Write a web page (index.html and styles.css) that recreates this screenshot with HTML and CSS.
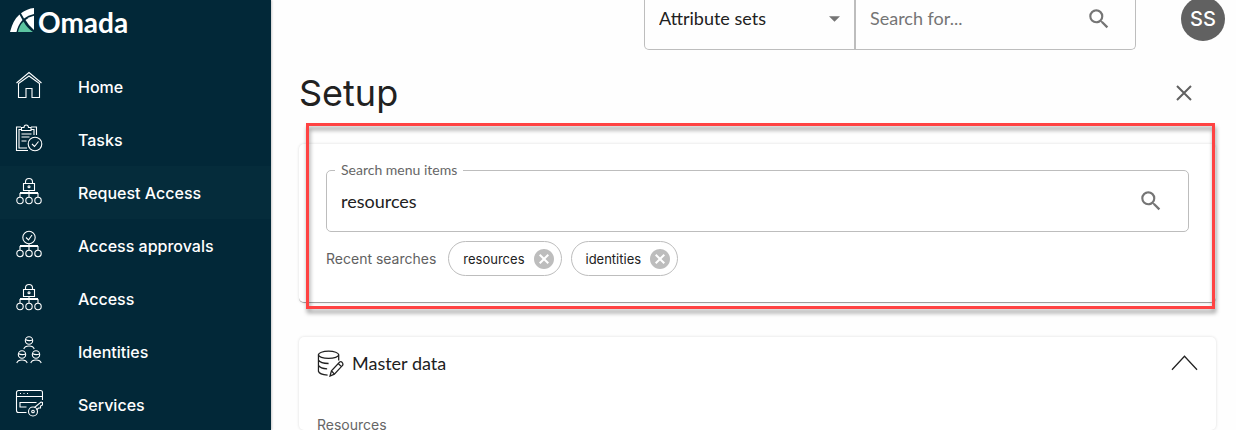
FILE: index.html
```html
<!DOCTYPE html>
<html lang="en">
<head>
<meta charset="utf-8">
<title>Omada - Setup</title>
<link rel="stylesheet" href="styles.css">
</head>
<body>
<svg class="defs" aria-hidden="true">
  <symbol id="search" viewBox="0 0 24 24"><path d="M15.5 14h-.79l-.28-.27A6.471 6.471 0 0 0 16 9.5 6.5 6.5 0 1 0 9.5 16c1.61 0 3.09-.59 4.23-1.57l.27.28v.79l5 4.99L20.49 19l-4.99-5zm-6 0C7.01 14 5 11.99 5 9.5S7.01 5 9.5 5 14 7.01 14 9.5 11.99 14 9.5 14z"/></symbol>
  <symbol id="remove" viewBox="0 0 24 24"><path d="M12 2C6.47 2 2 6.47 2 12s4.47 10 10 10 10-4.47 10-10S17.53 2 12 2zm5 13.59L15.59 17 12 13.41 8.41 17 7 15.59 10.59 12 7 8.41 8.41 7 12 10.59 15.59 7 17 8.41 13.41 12 17 15.59z"/></symbol>
  <symbol id="nodes" viewBox="0 0 28 28"><path d="M14 14v6M5 20v-3.500h18V20M5 15.500h18"/><circle cx="5" cy="23.500" r="3.200"/><circle cx="14" cy="23.500" r="3.200"/><circle cx="23" cy="23.500" r="3.200"/></symbol>
  <symbol id="locked" viewBox="0 0 28 28"><path d="M8.500 6.500h11v7h-11zM10.500 6.500V5a3.500 3.500 0 0 1 7 0v1.500"/><circle cx="14" cy="9.800" r="1"/><use href="#nodes"/></symbol>
  <symbol id="person" viewBox="0 0 12 14"><circle cx="6" cy="4.500" r="3.700"/><path d="M2.500 3.500q3 2 7 .5M.8 13q.8-3 5.200-3t5.200 3"/></symbol>
</svg>
<nav class="sidebar">
  <a class="brand" href="#">
    <svg class="mark" viewBox="0 0 24 24" aria-hidden="true">
      <path fill="#fff" d="M0 24Q3 12 9.500 6.500L12.500 12Q8 17 6.500 24z"/>
      <path fill="#fff" d="M11 5.200Q17 .8 24 0v6q-6 1-10 4.600z"/>
      <path fill="#fff" d="M15.500 12q4-3.300 8.500-4.200V22q-5.500-4.500-8.500-10z"/>
      <path fill="#5cc4a0" d="M8 24q1.200-6.500 5.500-10.500Q17 20 23 24z"/>
    </svg>
    <span>Omada</span>
  </a>
  <ul class="menu">
    <li><a href="#"><svg class="line" viewBox="0 0 28 28" aria-hidden="true"><path d="M1.500 12 14 1.500 26.500 12M3.500 12.500v14H11v-9h6v9h7.500v-14L14 5z"/></svg>Home</a></li>
    <li><a href="#"><svg class="line" viewBox="0 0 28 28" aria-hidden="true"><path d="M6 3H1.500v23.500H13M6 5.500H4V24h8M16 3h5.500v8M16 5.500h3V11M6.500 6.500v-3H9q0-2.500 2.200-2.500T13.500 3.500H16v3zM6.500 10h10M6.500 13h8M6.500 17h5M17 20l2.500 2.500 4-5"/><circle cx="20" cy="20" r="6.800"/></svg>Tasks</a></li>
    <li><a class="hovered" href="#"><svg class="line" viewBox="0 0 28 28" aria-hidden="true"><use href="#locked"/></svg>Request Access</a></li>
    <li><a href="#"><svg class="line" viewBox="0 0 28 28" aria-hidden="true"><circle cx="14" cy="7.500" r="6.200"/><path d="m11 7.500 2.500 2.500 3.500-5"/><use href="#nodes"/></svg>Access approvals</a></li>
    <li><a href="#"><svg class="line" viewBox="0 0 28 28" aria-hidden="true"><use href="#locked"/></svg>Access</a></li>
    <li><a href="#"><svg class="line" viewBox="0 0 28 28" aria-hidden="true"><use href="#person" x="8" y="0" width="12" height="14"/><use href="#person" x="1" y="14" width="12" height="14"/><use href="#person" x="15" y="14" width="12" height="14"/></svg>Identities</a></li>
    <li><a href="#"><svg class="line" viewBox="0 0 28 28" aria-hidden="true"><path d="M11.500 23.500h-8a2 2 0 0 1-2-2v-18a2 2 0 0 1 2-2h22a2 2 0 0 1 2 2V11M1.500 7.500h26M5 4.500h1M8.500 4.500h1M12 4.500h1M11.500 18H5v-4.500h16.500M19.500 18.500l6.500-5.500 1.500.500v2.500l-2 1v2h-2l-2 2"/><circle cx="18" cy="22.500" r="4.500"/><circle cx="18" cy="22.500" r="1.300"/></svg>Services</a></li>
  </ul>
</nav>
<main class="main">
  <header class="topbar">
    <form class="global-search">
      <span class="scope">
        <select aria-label="Search scope"><option>Attribute sets</option></select>
        <svg class="arrow" viewBox="0 0 10 5" aria-hidden="true"><path d="M0 0h10L5 5z"/></svg>
      </span>
      <input type="text" aria-label="Search" placeholder="Search for...">
      <button class="icon-button" type="button" aria-label="Search"><svg class="icon" aria-hidden="true"><use href="#search"/></svg></button>
    </form>
    <button class="avatar" type="button">SS</button>
  </header>
  <div class="title-row">
    <h1>Setup</h1>
    <button class="icon-button" type="button" aria-label="Close"><svg class="close" viewBox="0 0 16 16" aria-hidden="true"><path d="m1 1 14 14M15 1 1 15"/></svg></button>
  </div>
  <section class="card search-card">
    <fieldset class="field">
      <legend><label for="menu-search">Search menu items</label></legend>
      <div class="field-row">
        <input id="menu-search" type="text" value="resources">
        <button class="icon-button" type="button" aria-label="Search"><svg class="icon" aria-hidden="true"><use href="#search"/></svg></button>
      </div>
    </fieldset>
    <div class="recent">
      <span class="recent-label">Recent searches</span>
      <span class="chip">resources<button class="icon-button" type="button" aria-label="Remove resources"><svg class="icon" aria-hidden="true"><use href="#remove"/></svg></button></span>
      <span class="chip">identities<button class="icon-button" type="button" aria-label="Remove identities"><svg class="icon" aria-hidden="true"><use href="#remove"/></svg></button></span>
    </div>
    <div class="highlight"></div>
  </section>
  <section class="card data-card">
    <button class="section-head" type="button" aria-expanded="true">
      <svg class="database" viewBox="0 0 28 28" aria-hidden="true"><ellipse cx="12" cy="5" rx="10.500" ry="3.800"/><path d="M1.500 5v17q1 3.500 9.500 4M22.500 5v6M1.500 10.500q2 3.500 10.500 3.500M1.500 16q2 3.500 9 3.500M13.500 27l1.500-5.500L23.500 12.500q2-1 3 1t-.5 3L18 25zM15 21.500l3 3.500M22 14l3.500 3.500"/></svg>
      <span>Master data</span>
      <svg class="chevron" viewBox="0 0 28 16" aria-hidden="true"><path d="M1 15 14 1l13 14"/></svg>
    </button>
    <h2>Resources</h2>
  </section>
</main>
</body>
</html>
```

FILE: styles.css
```css
* { box-sizing: border-box; }
body {
  display: flex;
  margin: 0;
  height: 100vh;
  overflow: hidden;
  background: #fefefe;
  color: #212121;
  font: 18px/24px Lato, "Open Sans", sans-serif;
}
button, input, select { font: inherit; color: inherit; }
.defs { position: absolute; width: 0; height: 0; }

.sidebar {
  flex: none;
  width: 271px;
  background: #022838;
  color: #fff;
  box-shadow: 1px 0 2px rgba(0, 0, 0, .2);
}
.brand {
  display: flex;
  align-items: center;
  gap: 4px;
  height: 60px;
  padding: 0 10px 16px;
  color: #fff;
  font-size: 28px;
  font-weight: 700;
  text-decoration: none;
}
.mark { width: 24px; height: 24px; margin-bottom: 4px; }
.menu { margin: 0; padding: 0; list-style: none; }
.menu a {
  display: flex;
  align-items: center;
  gap: 35px;
  height: 53px;
  padding: 0 15px;
  color: #fff;
  font-family: Inter, sans-serif;
  font-size: 16px;
  font-weight: 500;
  text-decoration: none;
}
.menu .hovered { background: #052c3b; }
.line {
  width: 28px;
  height: 28px;
  margin-bottom: 4px;
  fill: none;
  stroke: #fff;
  stroke-width: 1.1;
}

.main {
  display: flex;
  flex: 1;
  flex-direction: column;
  min-width: 0;
  padding: 0 20px 0 28px;
}
.topbar {
  display: flex;
  flex: none;
  justify-content: flex-end;
  gap: 45px;
  height: 50px;
  margin-right: -9px;
}
.global-search {
  display: flex;
  width: 492px;
  border: 1px solid #bdbdbd;
  border-top: 0;
  border-radius: 0 0 5px 5px;
  padding-right: 23px;
}
.scope {
  display: flex;
  align-items: center;
  width: 211px;
  padding: 0 14px;
  border-right: 2px solid #bdbdbd;
}
.global-search select {
  flex: 1;
  min-width: 0;
  height: 36px;
  margin-bottom: 14px;
  padding: 0;
  border: 0;
  background: none;
  appearance: none;
}
.arrow { width: 11px; height: 6px; margin-bottom: 12px; fill: #757575; }
.global-search input {
  flex: 1;
  min-width: 0;
  height: 36px;
  padding: 0 14px;
  border: 0;
  background: none;
}
.global-search input::placeholder { color: #757575; opacity: 1; }
.global-search .icon-button { height: 38px; }
.icon-button {
  display: flex;
  align-items: center;
  padding: 0;
  border: 0;
  background: none;
  color: #757575;
}
.icon { width: 26px; height: 26px; fill: currentColor; }
.avatar {
  width: 44px;
  height: 44px;
  margin-top: -3px;
  padding: 0;
  border: 0;
  border-radius: 50%;
  background: #616161;
  color: #fff;
  font: 500 20px/44px Inter, sans-serif;
}

.title-row {
  display: flex;
  flex: none;
  align-items: center;
  justify-content: space-between;
  padding: 20px 24px 28px 0;
}
h1 {
  margin: 0;
  font: 400 36px/46px Inter, sans-serif;
}
.close {
  width: 16px;
  height: 16px;
  fill: none;
  stroke: #616161;
  stroke-width: 2;
}

.card {
  border-radius: 5px;
  background: #fff;
  box-shadow: 0 0 3px rgba(0, 0, 0, .14);
}
.search-card {
  position: relative;
  flex: none;
  margin-bottom: 34px;
  padding: 18px 27px 26px;
  border-bottom: 1px solid #9e9e9e;
}
.field {
  min-width: 0;
  height: 70px;
  margin: 0;
  padding: 0 24px 0 8px;
  border: 1px solid #bdbdbd;
  border-radius: 5px;
}
.field legend {
  padding: 0 6px;
  color: #666;
  font-size: 14px;
  line-height: 16px;
}
.field-row { display: flex; align-items: center; height: 45px; }
.field input {
  flex: 1;
  min-width: 0;
  padding: 0 6px;
  border: 0;
  background: none;
}
.recent {
  display: flex;
  align-items: center;
  gap: 9px;
  margin-top: 9px;
  font: 13px/20px Inter, sans-serif;
}
.recent-label { padding-right: 3px; color: #616161; font-size: 14px; }
.chip {
  display: flex;
  align-items: center;
  gap: 7px;
  height: 35px;
  padding: 0 5px 0 14px;
  border: 1px solid #bdbdbd;
  border-radius: 18px;
}
.chip .icon { width: 24px; height: 24px; fill: #bdbdbd; }
.highlight {
  position: absolute;
  inset: -21px 1px -7px 7px;
  border: 3px solid #ff4343;
  filter: drop-shadow(1px 4px 2px rgba(0, 0, 0, .4));
  pointer-events: none;
}

.data-card { flex: 1; min-height: 0; padding: 0 18px; }
.section-head {
  display: flex;
  align-items: center;
  gap: 8px;
  width: 100%;
  height: 52px;
  padding: 0;
  border: 0;
  background: none;
  text-align: left;
}
.section-head span { flex: 1; }
.database, .chevron { width: 27px; fill: none; stroke: #212121; stroke-width: 1.3; }
.database { height: 27px; }
.chevron { height: 16px; }
h2 {
  margin: 26px 0 0;
  color: #666;
  font: 400 14px/20px Inter, sans-serif;
}
```
